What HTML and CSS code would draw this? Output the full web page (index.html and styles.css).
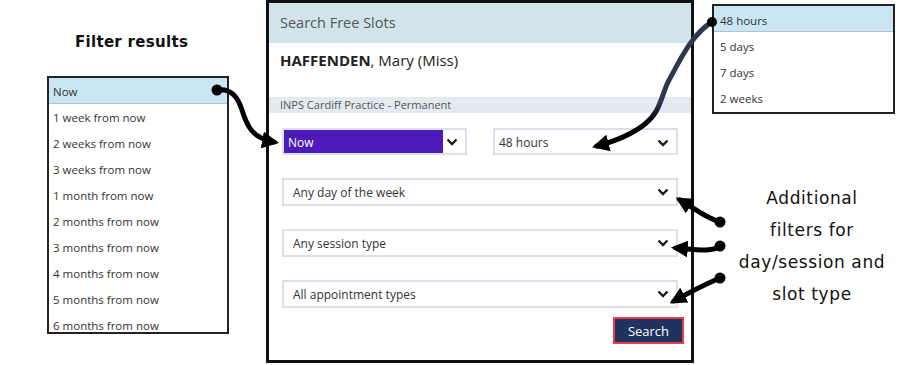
FILE: index.html
```html
<!DOCTYPE html>
<html lang="en">
<head>
    <meta charset="UTF-8">
    <meta name="viewport" content="width=device-width, initial-scale=1.0">
    <title>Search Free Slots</title>
    <link rel="stylesheet" href="styles.css">
</head>
<body>
    <div class="page">
        <div class="side-left">
            <div class="note note-filter">Filter results</div>
            <ul class="list list-when">
                <li class="selected">Now</li>
                <li>1 week from now</li>
                <li>2 weeks from now</li>
                <li>3 weeks from now</li>
                <li>1 month from now</li>
                <li>2 months from now</li>
                <li>3 months from now</li>
                <li>4 months from now</li>
                <li>5 months from now</li>
                <li>6 months from now</li>
            </ul>
        </div>

        <div class="panel">
            <div class="panel-head">Search Free Slots</div>
            <div class="patient"><b>HAFFENDEN</b>, Mary (Miss)</div>
            <div class="practice">INPS Cardiff Practice - Permanent</div>

            <div class="form">
                <div class="row row-split">
                    <div class="select select-active">
                        <span class="select-value">Now</span>
                        <svg class="chevron" width="12" height="8" viewBox="0 0 12 8"><polyline points="1.5,1.5 6,6 10.5,1.5"/></svg>
                    </div>
                    <div class="select select-small">
                        <span class="select-value">48 hours</span>
                        <svg class="chevron" width="12" height="8" viewBox="0 0 12 8"><polyline points="1.5,1.5 6,6 10.5,1.5"/></svg>
                    </div>
                </div>
                <div class="row">
                    <div class="select select-wide">
                        <span class="select-value">Any day of the week</span>
                        <svg class="chevron" width="12" height="8" viewBox="0 0 12 8"><polyline points="1.5,1.5 6,6 10.5,1.5"/></svg>
                    </div>
                </div>
                <div class="row">
                    <div class="select select-wide">
                        <span class="select-value">Any session type</span>
                        <svg class="chevron" width="12" height="8" viewBox="0 0 12 8"><polyline points="1.5,1.5 6,6 10.5,1.5"/></svg>
                    </div>
                </div>
                <div class="row">
                    <div class="select select-wide">
                        <span class="select-value">All appointment types</span>
                        <svg class="chevron" width="12" height="8" viewBox="0 0 12 8"><polyline points="1.5,1.5 6,6 10.5,1.5"/></svg>
                    </div>
                </div>
                <div class="actions">
                    <button class="btn-search">Search</button>
                </div>
            </div>
        </div>

        <div class="side-right">
            <ul class="list list-range">
                <li class="selected">48 hours</li>
                <li>5 days</li>
                <li>7 days</li>
                <li>2 weeks</li>
            </ul>
            <div class="note note-extra">Additional<br>filters for<br>day/session and<br>slot type</div>
        </div>

        <!-- callout arrows drawn over the screenshot -->
        <svg class="arrows" width="908" height="365" viewBox="0 0 908 365">
            <defs>
                <marker id="head" viewBox="0 0 10 10" refX="7" refY="5" markerWidth="3.4" markerHeight="3.4" orient="auto" markerUnits="strokeWidth">
                    <path d="M0,0 L10,5 L0,10 z" fill="#000"/>
                </marker>
                <linearGradient id="navy" x1="0" y1="0" x2="0" y2="1">
                    <stop offset="0" stop-color="#2b3850"/>
                    <stop offset="0.65" stop-color="#2b3850"/>
                    <stop offset="0.8" stop-color="#000"/>
                </linearGradient>
            </defs>
            <g fill="none" stroke-width="5" stroke-linecap="round">
                <path d="M217,90 C232,88 238,98 242,110 C247,126 252,138 274,142" stroke="#000" marker-end="url(#head)"/>
                <path d="M712,22 C692,34 680,60 668,82 C660,100 660,112 645,124 C630,136 612,142 597,146" stroke="url(#navy)" marker-end="url(#head)"/>
                <path d="M720,222 C706,218 700,212 680,200" stroke="#000" marker-end="url(#head)"/>
                <path d="M720,246 C712,252 700,250 676,248" stroke="#000" marker-end="url(#head)"/>
                <path d="M720,278 C706,284 690,292 674,301" stroke="#000" marker-end="url(#head)"/>
            </g>
            <g fill="#000">
                <circle cx="217" cy="90" r="5.5"/>
                <circle cx="712" cy="22" r="5"/>
                <circle cx="720" cy="222" r="5.5"/>
                <circle cx="720" cy="246" r="5.5"/>
                <circle cx="720" cy="278" r="5.5"/>
            </g>
        </svg>
    </div>
</body>
</html>
```

FILE: styles.css
```css
body {
    margin: 0;
    background: #fff;
    font-family: "Open Sans", "Noto Sans", sans-serif;
    color: #333;
}
.page {
    position: relative;
    width: 908px;
    height: 365px;
    display: flex;
    align-items: flex-start;
    overflow: hidden;
}

/* hand written notes */
.note {
    font-family: "DejaVu Sans", sans-serif;
    color: #111;
}
.note-filter {
    margin: 33px 0 0 28px;
    height: 43px;
    font-size: 15px;
    font-weight: bold;
    letter-spacing: 0.3px;
}
.note-extra {
    margin: 68px 0 0 0;
    text-align: center;
    font-size: 17px;
    letter-spacing: 0.6px;
    line-height: 32px;
    width: 200px;
}

/* dropdown lists */
.side-left {
    margin-left: 47px;
    width: 182px;
}
.side-right {
    margin-left: 18px;
    margin-top: 4px;
    width: 183px;
}
.list {
    list-style: none;
    margin: 0;
    padding: 0;
    border: 2px solid #222;
    background: #fff;
    overflow: hidden;
    font-size: 11.5px;
}
.list li {
    height: 26px;
    line-height: 28px;
    padding-left: 4px;
    white-space: nowrap;
}
.list li.selected {
    background: #cbe6f3;
    box-shadow: inset 0 -1px 0 #b4c2cf;
}
.list-when {
    height: 258px;
    box-sizing: border-box;
}
.list-range {
    height: 110px;
    box-sizing: border-box;
}
.list-range li {
    padding-left: 6px;
    line-height: 29px;
}

/* main dialog */
.panel {
    margin-left: 37px;
    width: 428px;
    height: 363px;
    box-sizing: border-box;
    border: 3px solid #111;
    background: #fff;
}
.panel-head {
    height: 40px;
    line-height: 40px;
    padding-left: 11px;
    background: #d1e4ea;
    font-size: 14.5px;
    color: #555;
}
.patient {
    margin-top: 7px;
    padding-left: 11px;
    line-height: 20px;
    font-size: 15px;
    color: #222;
}
.practice {
    margin-top: 27px;
    height: 16px;
    line-height: 16px;
    padding-left: 11px;
    background: #e2ecf0;
    font-size: 11px;
    color: #555;
}
.form {
    padding: 15px 13px 0;
}
.row {
    display: flex;
    margin-bottom: 23px;
}
.row-split {
    justify-content: space-between;
}
.select {
    display: flex;
    align-items: center;
    justify-content: space-between;
    box-sizing: border-box;
    height: 28px;
    border: 2px solid #dbe1ec;
    background: #fff;
    font-size: 12px;
    color: #333;
}
.select-wide {
    width: 100%;
    padding: 0 7px 0 9px;
}
.select-small {
    width: 185px;
    height: 27px;
    padding: 2px 7px 0 4px;
}
.select-active {
    width: 185px;
    height: 27px;
    padding-right: 7px;
}
.select-active .select-value {
    align-self: stretch;
    width: 155px;
    padding: 2px 0 0 4px;
    line-height: 21px;
    background: #4b1ab8;
    color: #fff;
}
.chevron polyline {
    fill: none;
    stroke: #1a1a1a;
    stroke-width: 2.4;
}
.actions {
    display: flex;
    justify-content: flex-end;
    margin-top: -14px;
    margin-right: -6px;
}
.btn-search {
    width: 71px;
    height: 27px;
    border: 2px solid #ea3d47;
    background: #1f3361;
    color: #fff;
    font-family: "Open Sans", "Noto Sans", sans-serif;
    font-size: 13px;
    padding: 0;
}

.arrows {
    position: absolute;
    left: 0;
    top: 0;
    pointer-events: none;
}
```
